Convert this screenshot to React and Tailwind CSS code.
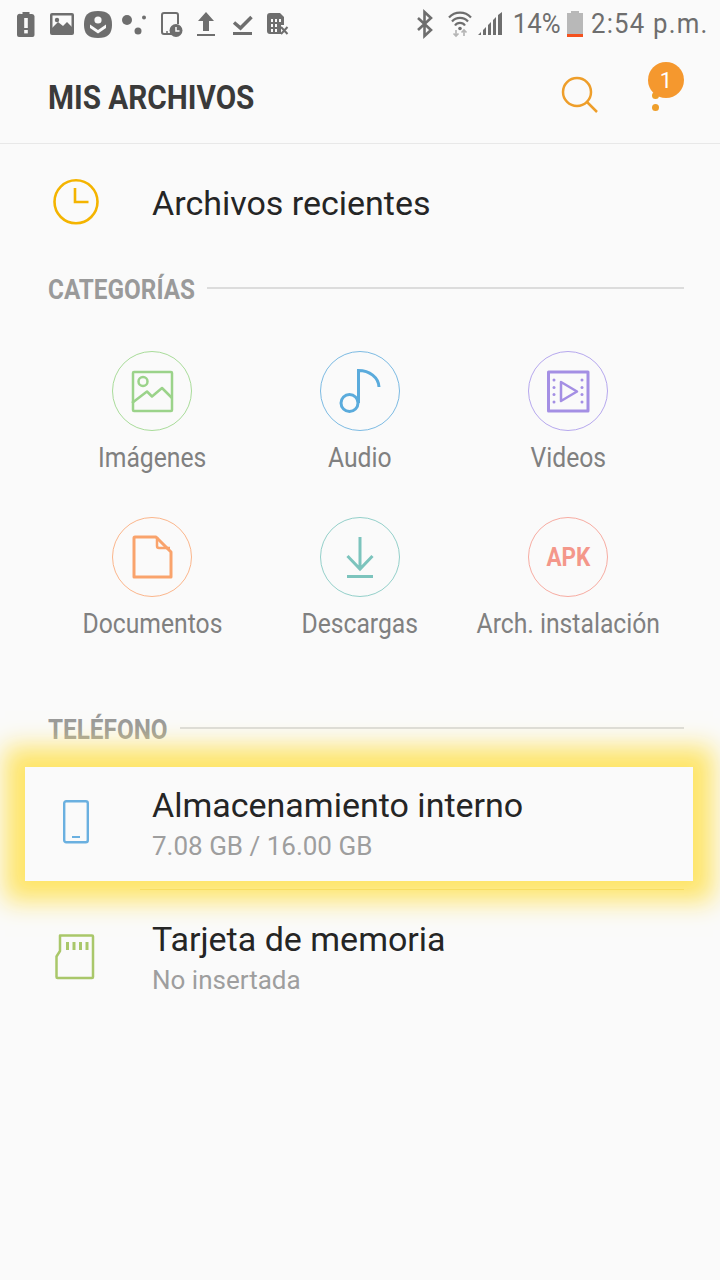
import React from "react";

const G = "#6e6e6e";

function StatusLeft() {
  return (
    <svg width="300" height="48" viewBox="0 0 300 48" fill="none" className="shrink-0">
      {/* battery alert */}
      <path d="M21 14h1.500v-2h7v2H31a3 3 0 0 1 3.500 2v19a2 2 0 0 1-2 2H19a2 2 0 0 1-2-2V16a3 3 0 0 1 4-2z" fill={G} />
      <rect x="24.200" y="18" width="3.600" height="10" fill="#fafafa" />
      <rect x="24.200" y="30" width="3.600" height="3.400" fill="#fafafa" />
      {/* image */}
      <rect x="50" y="13" width="24" height="22" rx="2" fill={G} />
      <rect x="52.500" y="15.500" width="19" height="17" fill="#fafafa" />
      <path d="M52 33v-5l6-6 5 4 4-4 5 5v6z" fill={G} />
      <circle cx="57" cy="20" r="2.200" fill={G} />
      {/* heart squircle */}
      <path d="M98 11c10 0 14 4 14 13.500s-4 13.500-14 13.500-14-4-14-13.500 4-13.500 14-13.500z" fill={G} />
      <circle cx="98" cy="20" r="3.600" fill="#fafafa" />
      <path d="M90 24.500l8 5.500 8-5.500v3.500l-8 5.500-8-5.500z" fill="#fafafa" />
      {/* dots */}
      <circle cx="127" cy="20" r="5" fill={G} />
      <circle cx="144" cy="17.500" r="2" fill={G} />
      <circle cx="138" cy="31" r="3.500" fill={G} />
      {/* tablet clock */}
      <path d="M172 34h-8a2 2 0 0 1-2-2V15a2 2 0 0 1 2-2h12a2 2 0 0 1 2 2v9" stroke={G} strokeWidth="2" />
      <circle cx="167" cy="32" r="1" fill={G} />
      <circle cx="176" cy="30.500" r="6.500" fill={G} />
      <path d="M176 27v4h3.500" stroke="#fafafa" strokeWidth="1.500" />
      {/* upload */}
      <path d="M206 12l8 9h-5v10h-6V21h-5z" fill={G} />
      <rect x="197" y="34" width="18" height="2" fill={G} />
      {/* check bar */}
      <path d="M234 22.500l6.500 5.500 11-11" stroke={G} strokeWidth="3.500" />
      <rect x="233" y="32" width="19" height="3" fill={G} />
      {/* sim x */}
      <path d="M270 13h10l4 4v8h-3v9h-11a3 3 0 0 1-3-3V16a3 3 0 0 1 3-3z" fill={G} />
      <path d="M271 19h2v3h-2zM275 19h2v3h-2zM279 19h2v3h-2zM271 24h2v3h-2zM275 24h2v3h-2zM271 29h2v3h-2zM275 29h2v3h-2z" fill="#fafafa" />
      <path d="M281 27l6.500 7m0-7l-6.500 7" stroke={G} strokeWidth="2" />
    </svg>
  );
}

function StatusRight() {
  return (
    <div className="flex items-center h-12 pr-3 text-[#6e6e6e]">
      <svg width="96" height="48" viewBox="0 0 96 48" fill="none" className="shrink-0">
        <path d="M4 18l13 12-6.500 6V12l6.500 6-13 12" stroke={G} strokeWidth="2.600" />
        <path d="M35 17.500a15 15 0 0 1 22 0M38 21.500a10.500 10.500 0 0 1 16 0M41 25.500a6 6 0 0 1 10 0" stroke={G} strokeWidth="2.200" />
        <circle cx="46" cy="28.500" r="1.800" fill={G} />
        <path d="M42 30v6M39.500 33.500l2.500 2.500 2.500-2.500M50 36v-6M47.500 32.500l2.500-2.500 2.500 2.500" stroke="#b5b5b5" strokeWidth="1.700" />
        <path d="M64 35l3-3v3zM69 35v-5l3-3v8zM74 35V25l3-3v13zM79 35V20l3-3v18zM84 35V15l4-3v23z" fill={G} />
      </svg>
      <span className="text-[28px] leading-none scale-x-[0.92] origin-left w-[57px] pl-[3px] whitespace-nowrap">14%</span>
      <span className="relative w-4 h-[24px] bg-[#b8b8b8] mt-[1px] shrink-0">
        <span className="absolute left-[4px] right-[4px] -top-[2px] h-[2px] bg-[#b8b8b8]" />
        <span className="absolute left-0 right-0 bottom-0 h-[3px] bg-[#f4511e]" />
      </span>
      <span className="text-[28px] leading-none scale-x-[0.92] origin-left tracking-[1.3px] w-[117px] ml-2 whitespace-nowrap">2:54 p.m.</span>
    </div>
  );
}

function Circle({ color, children }) {
  return (
    <div className="w-20 h-20 rounded-full border flex items-center justify-center" style={{ borderColor: color }}>
      {children}
    </div>
  );
}

const Ic = ({ children }) => (
  <svg width="78" height="78" viewBox="1 1 78 78" fill="none">{children}</svg>
);

const cats = [
  {
    label: "Imágenes", color: "#a9dc9a",
    icon: (
      <Ic>
        <g stroke="#9bd38a" strokeWidth="2.500" strokeLinejoin="round">
          <rect x="21" y="21" width="39" height="39" rx="1" />
          <circle cx="31" cy="30.500" r="4.500" />
          <path d="M20 52l15-11.500 5 5 10-8.500 10 10" />
        </g>
      </Ic>
    ),
  },
  {
    label: "Audio", color: "#7dbbe3",
    icon: (
      <Ic>
        <g stroke="#5aabdc" strokeWidth="3">
          <circle cx="29.500" cy="52" r="8.500" />
          <path d="M38.500 52V19.500c11 0 20 7 20.500 16.500" />
        </g>
      </Ic>
    ),
  },
  {
    label: "Videos", color: "#b6a8ee",
    icon: (
      <Ic>
        <rect x="20.500" y="21" width="39.500" height="39" stroke="#a48fe4" strokeWidth="3" strokeLinejoin="round" />
        <path d="M33 31l16 9.500-16 9.500z" stroke="#a48fe4" strokeWidth="2.500" strokeLinejoin="round" />
        {[26, 54].map((x) => [29, 36.500, 43.500, 51].map((y) => <circle key={x + "-" + y} cx={x} cy={y} r="1.500" fill="#a48fe4" />))}
      </Ic>
    ),
  },
  {
    label: "Documentos", color: "#fbb68c",
    icon: (
      <Ic>
        <g stroke="#f9a36c" strokeWidth="3" strokeLinejoin="round">
          <path d="M23 20h21l15 15v25H22V21a1 1 0 0 1 1-1z" />
          <path d="M45 20v9a2 2 0 0 0 2 2h11" strokeWidth="2.500" />
        </g>
      </Ic>
    ),
  },
  {
    label: "Descargas", color: "#94d0ca",
    icon: (
      <Ic>
        <g stroke="#7cc4bd" strokeWidth="3">
          <path d="M40 20v33M27.500 39L40 52l12.500-13" />
          <path d="M27 59.500h26" />
        </g>
      </Ic>
    ),
  },
  {
    label: "Arch. instalación", color: "#f7aca2",
    icon: <span className="text-[25px] font-bold text-[#f4978a] scale-x-[0.9] mt-[2px]">APK</span>,
  },
];

function Section({ title, className = "" }) {
  return (
    <div className={"flex items-center pl-12 pr-9 " + className}>
      <span className="text-[27px] leading-none font-bold text-[#9a9a9a] scale-x-[0.9] origin-left whitespace-nowrap mt-[2px]" style={{ width: title === "CATEGORÍAS" ? 159 : 132 }}>{title}</span>
      <div className="flex-1 h-0.5 bg-[#dcdcdc] -mt-[2px]" />
    </div>
  );
}

function StorageRow({ icon, title, sub, className = "", children }) {
  return (
    <div className={"flex items-center h-[114px] ml-[25px] mr-[27px] " + className}>
      <div className="w-[127px] shrink-0 pl-[30px]">{icon}</div>
      <div className="flex flex-col">
        <span className="text-[34px] leading-[38px] text-[#252525]">{title}</span>
        <span className="text-[26px] leading-[32px] mt-[6px] text-[#9e9e9e]">{sub}</span>
      </div>
      {children}
    </div>
  );
}

export default function App() {
  return (
    <div className="w-[720px] h-[1280px] bg-[#fafafa] overflow-hidden font-['Roboto',sans-serif]">
      <div className="flex justify-between items-center h-12">
        <StatusLeft />
        <StatusRight />
      </div>
      <header className="relative flex items-center h-[96px] pl-12 border-b border-[#e8e8e8]">
        <h1 className="text-[33px] leading-none font-bold text-[#3a3a3a] scale-x-[0.9] origin-left whitespace-nowrap mt-[3px]">MIS ARCHIVOS</h1>
        <svg width="40" height="40" viewBox="0 0 40 40" fill="none" className="absolute left-[560px] top-[28px]">
          <circle cx="17" cy="16" r="14" stroke="#ee9e2a" strokeWidth="2.500" />
          <path d="M27 26l10 10" stroke="#ee9e2a" strokeWidth="2.500" />
        </svg>
        <span className="absolute left-[652px] top-[44px] w-[7px] h-[7px] rounded-full bg-[#ee9e2a]" />
        <span className="absolute left-[652px] top-[56px] w-[7px] h-[7px] rounded-full bg-[#ee9e2a]" />
        <span className="absolute left-[648px] top-[14px] w-9 h-9 rounded-full bg-[#f5982e] text-white text-[22px] flex items-center justify-center">1</span>
      </header>

      <div className="flex items-center h-[118px] pl-[52px]">
        <svg width="48" height="48" viewBox="0 0 48 48" fill="none" className="shrink-0">
          <circle cx="24" cy="22.800" r="21.500" stroke="#f4b400" strokeWidth="2.600" />
          <path d="M23 9v14h13.500" stroke="#f4b400" strokeWidth="2.600" />
        </svg>
        <span className="ml-[52px] text-[34px] leading-none text-[#252525]">Archivos recientes</span>
      </div>

      <Section title="CATEGORÍAS" className="h-[54px]" />

      <div className="grid grid-cols-3 mx-12 mt-[35px]">
        {cats.map((c) => (
          <div key={c.label} className="flex flex-col items-center h-[166px]">
            <Circle color={c.color}>{c.icon}</Circle>
            <span className="mt-[11px] text-[27px] leading-[32px] text-[#808080] scale-x-[0.915] whitespace-nowrap">{c.label}</span>
          </div>
        ))}
      </div>

      <Section title="TELÉFONO" className="h-[54px] mt-[19px]" />

      <StorageRow
        className="relative mt-[11px] bg-[#fafafa] shadow-[0_0_24px_20px_#fee568]"
        title="Almacenamiento interno"
        sub="7.08 GB / 16.00 GB"
        icon={
          <svg width="30" height="46" viewBox="0 0 30 46" fill="none" className="ml-[6px] -mt-[4px]">
            <rect x="3.200" y="2.200" width="23.600" height="41" rx="2" stroke="#6ab0e0" strokeWidth="2.400" />
            <path d="M11 38h8" stroke="#6ab0e0" strokeWidth="2" />
          </svg>
        }
      >
        <span className="absolute left-[115px] right-[9px] top-[122px] h-px bg-[#f8de62]" />
      </StorageRow>
      <StorageRow
        className="mt-[20px]"
        title="Tarjeta de memoria"
        sub="No insertada"
        icon={
          <svg width="42" height="48" viewBox="0 0 42 48" fill="none">
            <path d="M5 1.500h32a1 1 0 0 1 1 1V43a1 1 0 0 1-1 1H2.500a1 1 0 0 1-1-1V22.500L5 17z" stroke="#a9c76a" strokeWidth="2.500" strokeLinejoin="round" />
            <path d="M12.500 8v8M19 8v8M25.500 8v8M32 8v8" stroke="#a9c76a" strokeWidth="3" />
          </svg>
        }
      />
    </div>
  );
}
